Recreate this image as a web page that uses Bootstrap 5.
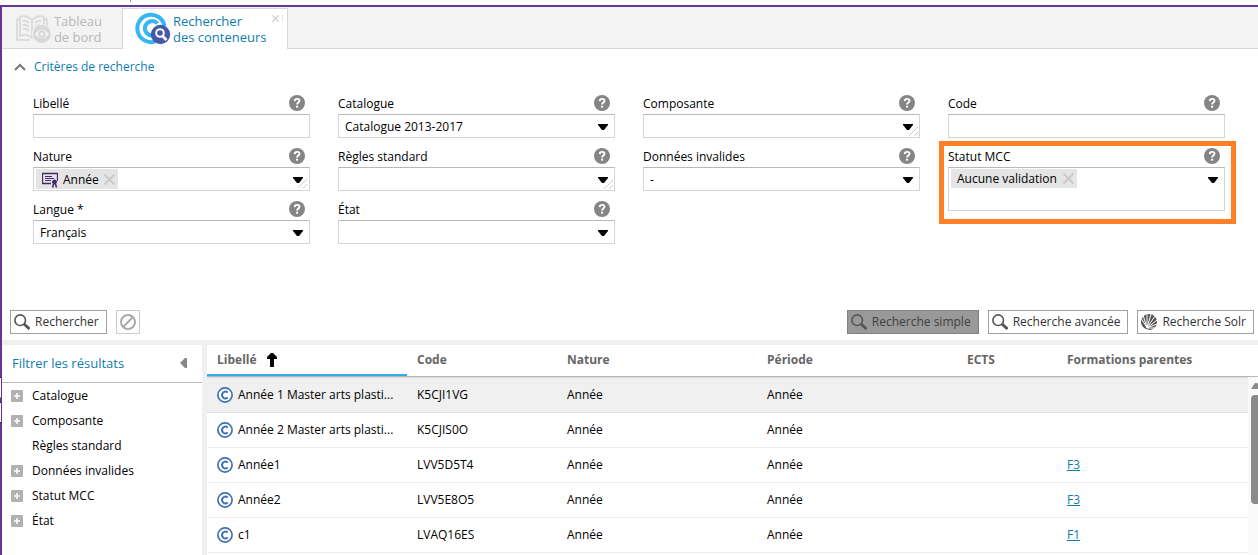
<!DOCTYPE html>
<html lang="fr">
<head>
<meta charset="utf-8">
<meta name="viewport" content="width=device-width, initial-scale=1">
<title>Rechercher des conteneurs</title>
<link href="https://cdn.jsdelivr.net/npm/bootstrap@5.3.0/dist/css/bootstrap.min.css" rel="stylesheet">
<style>
body{font:12px/18px "Open Sans",sans-serif;color:#000;background:#fff;margin:0;overflow:hidden}
.shell{height:100vh;padding-top:5px;background:#fdfcfb}
.shell::before{content:"";position:absolute;left:130px;top:0;width:1px;height:2px;background:#a89c96}
.frame{border-left:2px solid #663399;border-top:2px solid #663399;min-height:0;background:#fff;position:relative}
.frame::before{content:"";position:absolute;left:-2px;top:370px;width:1px;height:46px;background:linear-gradient(#222 1px,#fff 1px 20px,#e08060 20px 21px,#663399 21px 25px,#222 25px 26px,#fff 26px 45px,#222 45px)}
.tabbar{background:#f3f3f3;box-shadow:inset 0 -1px #d9d9d9;padding-top:1px;font-size:13px;line-height:16px}
.tabbtn{border:0;background:none;height:41px;color:#b8b8b8;padding:4px 20px 4px 14px;text-align:left;line-height:16px;gap:2px;width:120px;border-top:1px solid transparent}
.tabbtn.current{width:166px;color:#0f7cb0;background:#fff;border:1px solid #d9d9d9;border-bottom:0;padding:0 0 0 12px;gap:2px}
.tabclose{position:absolute;right:5px;top:7px;padding:0 3px 0 0;border:0;border-right:1px solid #e4e4e4;background:none;line-height:0}
.linkish{color:#0f7cb0}
.critbar{padding:9px 12px 0 12px}
.critbar button{border:0;background:none;padding:0;gap:8px;font-size:12px;line-height:18px}
.fields{display:grid;grid-template-columns:repeat(4,minmax(0,1fr));column-gap:28px;row-gap:9px;padding:18px 33px 0 31px}
.field{position:relative}
.fhead{height:20px;padding:1px 5px 0 0}
.fhead label{line-height:18px}
.fhead button{border:0;padding:0;background:none;line-height:0;height:16px}
.fbox{height:24px;border:1px solid #d4d4d4;border-top-color:#b9b9b9;background:#fff;position:relative;padding:0 22px 0 2px}
.fbox.tall{height:44px;align-items:flex-start!important;padding-top:1px}
.plain{width:100%;height:24px;display:block;border:1px solid #d4d4d4;border-top-color:#b9b9b9;border-radius:0;padding:1px 6px 0;background:#fff;color:#000;font-size:12px;appearance:none}
.fbox input{border:0;outline:0;background:none;flex:1;min-width:0;height:20px;padding:0 3px}
.arrow{position:absolute;right:6px;top:9px;pointer-events:none}
.grip{position:absolute;right:2px;bottom:2px;pointer-events:none}
.pick{position:relative}
.pick .arrow{right:7px;top:10px}
.chip{background:#e5e5e5;height:20px;padding:1px 3px 0 6px;gap:5px;line-height:18px}
.chip.short{height:19px;gap:6px;padding-top:0}
.chip button{border:0;background:none;padding:0;line-height:0}
.spot{grid-column:4;grid-row:2/4;align-self:start}
.spot::after{content:"";position:absolute;inset:-6px -11px -13px -9px;border:5px solid #ff7f27;pointer-events:none}
.tools{padding:0 4px 6px 8px}
.tool{border:1px solid #a0a0a0;border-radius:0;background:#fff;height:24px;color:#333;padding:0 7px 0 3px;font-size:12px;line-height:18px;gap:5px}
.tool.on{background:#999;border-color:#808080;color:#404040}
.tool.off{border-color:#ccc;width:24px;padding:0;justify-content:center}
.tools,.modes{gap:9px}
.upper{height:333px}
.lower{border-top:5px solid #f0f0f0;min-height:0}
.side{width:205px;border-right:5px solid #f0f0f0}
.sidehead{height:38px;border-bottom:1px solid #b9b9b9;padding:0 15px 2px 10px;font-size:13px}
.sidehead button{border:0;background:none;padding:0;line-height:0}
.side li{height:25px;padding-left:9px;gap:9px}
.toggle{width:12px;height:12px;padding:0;border:0;line-height:0;background:none}
.results{table-layout:fixed;width:100%;border-collapse:separate;border-spacing:0}
.results th{height:33px;color:#666;font-weight:700;padding:0 10px 2px;border-bottom:1px solid #dcdcdc;box-shadow:inset 0 -1px #b9b9b9;vertical-align:middle;white-space:nowrap;line-height:18px}
.results th.sorted{box-shadow:inset 0 -1px #b9b9b9,inset 0 -3px #35aaea}
.sortlabel{gap:10px}
.results td{height:35px;padding:0 10px;border-bottom:1px solid #ededed;white-space:nowrap;overflow:hidden}
.results tr.hit td{background:#f0f0f0;border-color:#e2e2e2}
.results a{color:#0f7cb0}
.label-cell{gap:5px}
.scroller{position:absolute;right:0;top:32px;bottom:0;width:10px;background:#fafafa}
.thumb{position:absolute;left:3px;right:0;top:18px;height:109px;background:#8b8b8b;border-radius:4px 0 0 4px}
.scroller svg{position:absolute;left:3px;top:5px}
</style>
</head>
<body>
<svg width="0" height="0" class="position-absolute" aria-hidden="true">
<symbol id="help" viewBox="0 0 16 16"><circle cx="8" cy="8" r="8" fill="#858585"/><path d="M5.7 6.1C5.8 3.2 10.5 3.1 10.5 5.8C10.5 7.5 8.1 7.7 8.1 9.5" fill="none" stroke="#fff" stroke-width="1.9"/><path d="M7.1 10.7h2v2h-2z" fill="#fff"/></symbol>
<symbol id="down" viewBox="0 0 10 6"><path d="M0 0H10V1L6 6H4L0 1Z"/></symbol>
<symbol id="gripmark" viewBox="0 0 9 9"><path d="M0 9L9 0M5 9L9 5" stroke="#ccc" fill="none"/></symbol>
<symbol id="cross" viewBox="0 0 10 10"><path d="M0.500 0.500L9.500 9.500M9.500 0.500L0.500 9.500" stroke="#c8c8c8" stroke-width="1.7"/></symbol>
<symbol id="lens" viewBox="0 0 16 16"><circle cx="6.200" cy="6.200" r="5.300" fill="none" stroke="#555" stroke-width="1.600"/><path d="M10 10L15.500 15" stroke="#555" stroke-width="2.800"/></symbol>
<symbol id="plus" viewBox="0 0 12 12"><rect width="12" height="12" rx="1" fill="#b1b1b1"/><path d="M3 6H9M6 3V9" stroke="#fff" stroke-width="1.500"/></symbol>
<symbol id="cc" viewBox="0 0 16 16"><circle cx="8" cy="8" r="7.100" fill="#fff" stroke="#3f70b4" stroke-width="1.700"/><path d="M10.700 5.400A3.400 3.400 0 1 0 10.700 10.600" fill="none" stroke="#3f70b4" stroke-width="1.900"/></symbol>
</svg>
<div class="shell d-flex flex-column">
<div class="frame d-flex flex-column flex-grow-1">
<section class="upper d-flex flex-column">
<nav class="tabbar d-flex flex-shrink-0">
<button class="tabbtn d-flex align-items-center" type="button">
<svg width="36" height="32" viewBox="0 0 36 32" fill="none" stroke="#dadada" stroke-width="1.800"><path d="M4 6H1V27H14M28 6H31V15M16 7Q10 1 4 4V23Q11 20 16 25Q21 20 28 23V4Q22 1 16 7V25M7 8Q11 7 13 10M7 12Q11 11 13 14M7 16Q11 15 13 18M19 10Q22 7 25 8M19 14Q22 11 25 12"/><circle cx="26" cy="21" r="9.500" fill="#d8d8d8" stroke="#f3f3f3" stroke-width="1"/><path d="M19 21Q26 12.500 33 21Q26 29.500 19 21Z" fill="#f3f3f3" stroke="none"/><circle cx="26" cy="21" r="3.600" fill="#d4d4d4" stroke="none"/><circle cx="26" cy="21" r="1.700" fill="#f3f3f3" stroke="none"/></svg>
<span>Tableau<br>de bord</span></button>
<div class="position-relative"><button class="tabbtn current d-flex align-items-center" type="button">
<svg width="36" height="34" viewBox="0 0 36 34" fill="none"><path d="M20 29.500A13.700 13.700 0 1 1 29.500 14M22.500 11.500A7.200 7.200 0 1 0 17 23.500" stroke="#36b7f4" stroke-width="4"/><circle cx="25.500" cy="22.500" r="9.700" fill="#4658ab"/><circle cx="25" cy="21" r="3.800" stroke="#fff" stroke-width="2"/><path d="M27.500 24L31.500 28" stroke="#fff" stroke-width="2.600"/></svg>
<span>Rechercher<br>des conteneurs</span></button>
<button class="tabclose" type="button" aria-label="Fermer"><svg width="7" height="7"><use href="#cross"/></svg></button></div>
</nav>
<div class="critbar d-flex"><button type="button" class="linkish d-flex align-items-center"><svg width="12" height="8" viewBox="0 0 12 8"><path d="M1 7L6 2L11 7" fill="none" stroke="#777" stroke-width="2"/></svg>Critères de recherche</button></div>
<form class="fields">
<div class="field"><div class="fhead d-flex justify-content-between"><label for="f1">Libellé</label><button type="button" aria-label="Aide"><svg width="16" height="16"><use href="#help"/></svg></button></div><input class="plain" id="f1"></div>
<div class="field"><div class="fhead d-flex justify-content-between"><label for="f2">Catalogue</label><button type="button" aria-label="Aide"><svg width="16" height="16"><use href="#help"/></svg></button></div><div class="pick"><select class="plain" id="f2"><option>Catalogue 2013-2017</option></select><svg class="arrow" width="10" height="6"><use href="#down"/></svg></div></div>
<div class="field"><div class="fhead d-flex justify-content-between"><label for="f3">Composante</label><button type="button" aria-label="Aide"><svg width="16" height="16"><use href="#help"/></svg></button></div><div class="pick"><select class="plain" id="f3"><option></option></select><svg class="arrow" width="10" height="6"><use href="#down"/></svg><svg class="grip" width="9" height="9"><use href="#gripmark"/></svg></div></div>
<div class="field"><div class="fhead d-flex justify-content-between"><label for="f4">Code</label><button type="button" aria-label="Aide"><svg width="16" height="16"><use href="#help"/></svg></button></div><input class="plain" id="f4"></div>
<div class="field"><div class="fhead d-flex justify-content-between"><label for="f5">Nature</label><button type="button" aria-label="Aide"><svg width="16" height="16"><use href="#help"/></svg></button></div><div class="fbox d-flex align-items-center"><span class="chip d-flex align-items-center"><svg width="16" height="16" viewBox="0 0 16 16" fill="none" stroke="#45296b"><path d="M9 11.500H0.500V1.500H15.500V9" stroke-width="1.300"/><path d="M3 4.500H10M3 6.500H12M3 8.500H9"/><circle cx="12.500" cy="10" r="2" fill="#45296b"/><path d="M11.500 12L10.500 15.500M13.500 12L14.500 15.500" stroke-width="1.600"/></svg>Année<button type="button" aria-label="Retirer Année"><svg width="11" height="11"><use href="#cross"/></svg></button></span><input id="f5"><svg class="arrow" width="10" height="6"><use href="#down"/></svg><svg class="grip" width="9" height="9"><use href="#gripmark"/></svg></div></div>
<div class="field"><div class="fhead d-flex justify-content-between"><label for="f6">Règles standard</label><button type="button" aria-label="Aide"><svg width="16" height="16"><use href="#help"/></svg></button></div><div class="pick"><select class="plain" id="f6"><option></option></select><svg class="arrow" width="10" height="6"><use href="#down"/></svg><svg class="grip" width="9" height="9"><use href="#gripmark"/></svg></div></div>
<div class="field"><div class="fhead d-flex justify-content-between"><label for="f7">Données invalides</label><button type="button" aria-label="Aide"><svg width="16" height="16"><use href="#help"/></svg></button></div><div class="pick"><select class="plain" id="f7"><option>-</option></select><svg class="arrow" width="10" height="6"><use href="#down"/></svg></div></div>
<div class="field spot"><div class="fhead d-flex justify-content-between"><label for="f8">Statut MCC</label><button type="button" aria-label="Aide"><svg width="16" height="16"><use href="#help"/></svg></button></div><div class="fbox tall d-flex"><span class="chip short d-flex align-items-center">Aucune validation<button type="button" aria-label="Retirer Aucune validation"><svg width="11" height="11"><use href="#cross"/></svg></button></span><input id="f8"><svg class="arrow" width="10" height="6"><use href="#down"/></svg></div></div>
<div class="field"><div class="fhead d-flex justify-content-between"><label for="f9">Langue *</label><button type="button" aria-label="Aide"><svg width="16" height="16"><use href="#help"/></svg></button></div><div class="pick"><select class="plain" id="f9"><option>Français</option></select><svg class="arrow" width="10" height="6"><use href="#down"/></svg></div></div>
<div class="field"><div class="fhead d-flex justify-content-between"><label for="f10">État</label><button type="button" aria-label="Aide"><svg width="16" height="16"><use href="#help"/></svg></button></div><div class="pick"><select class="plain" id="f10"><option></option></select><svg class="arrow" width="10" height="6"><use href="#down"/></svg></div></div>
</form>
<div class="tools d-flex mt-auto">
<button class="tool d-flex align-items-center" type="button"><svg width="16" height="16"><use href="#lens"/></svg>Rechercher</button>
<button class="tool off d-flex align-items-center" type="button" aria-label="Effacer"><svg width="16" height="16" viewBox="0 0 16 16" fill="none" stroke="#aaa" stroke-width="2"><circle cx="8" cy="8" r="7"/><path d="M3 13L13 3"/></svg></button>
<div class="modes d-flex ms-auto">
<button class="tool on d-flex align-items-center" type="button"><svg width="16" height="16"><use href="#lens"/></svg>Recherche simple</button>
<button class="tool d-flex align-items-center" type="button"><svg width="16" height="16"><use href="#lens"/></svg>Recherche avancée</button>
<button class="tool d-flex align-items-center" type="button"><svg width="16" height="16" viewBox="0 0 16 16"><path d="M5 15A8 8 0 0 1 0 8A8 8 0 0 1 8 0A8 8 0 0 1 16 8A8 8 0 0 1 9 16Z" fill="#555"/><path d="M6 14L0 4M6 14L2 1M6 14L6 0M6 14L10 0M6 14L14 2M6 14L16 6M6 14L16 10M6 14L16 14" stroke="#fff" stroke-width="1"/></svg>Recherche Solr</button>
</div></div>
</section>
<section class="lower d-flex flex-grow-1">
<aside class="side flex-shrink-0">
<div class="sidehead linkish d-flex align-items-center justify-content-between">Filtrer les résultats<button type="button" aria-label="Replier"><svg width="8" height="12"><path d="M8 1V11L6 11L1 6L6 1Z" fill="#888"/></svg></button></div>
<ul class="list-unstyled m-0">
<li class="d-flex align-items-center"><button class="toggle" type="button" aria-label="Déplier"><svg width="12" height="12"><use href="#plus"/></svg></button>Catalogue</li>
<li class="d-flex align-items-center"><button class="toggle" type="button" aria-label="Déplier"><svg width="12" height="12"><use href="#plus"/></svg></button>Composante</li>
<li class="d-flex align-items-center"><span class="toggle"></span>Règles standard</li>
<li class="d-flex align-items-center"><button class="toggle" type="button" aria-label="Déplier"><svg width="12" height="12"><use href="#plus"/></svg></button>Données invalides</li>
<li class="d-flex align-items-center"><button class="toggle" type="button" aria-label="Déplier"><svg width="12" height="12"><use href="#plus"/></svg></button>Statut MCC</li>
<li class="d-flex align-items-center"><button class="toggle" type="button" aria-label="Déplier"><svg width="12" height="12"><use href="#plus"/></svg></button>État</li>
</ul>
</aside>
<div class="flex-grow-1 position-relative overflow-hidden">
<table class="results">
<colgroup><col style="width:200px"><col style="width:150px"><col style="width:200px"><col style="width:200px"><col style="width:100px"><col></colgroup>
<thead><tr><th class="sorted"><div class="sortlabel d-flex align-items-center">Libellé<svg width="10" height="14" viewBox="0 0 10 14"><path d="M4 0H6L10 4V6H7V14H3V6H0V4Z"/></svg></div></th><th>Code</th><th>Nature</th><th>Période</th><th>ECTS</th><th>Formations parentes</th></tr></thead>
<tbody>
<tr class="hit"><td><div class="label-cell d-flex align-items-center"><svg class="flex-shrink-0" width="16" height="16"><use href="#cc"/></svg>Année 1 Master arts plasti...</div></td><td>K5CJI1VG</td><td>Année</td><td>Année</td><td></td><td></td></tr>
<tr><td><div class="label-cell d-flex align-items-center"><svg class="flex-shrink-0" width="16" height="16"><use href="#cc"/></svg>Année 2 Master arts plasti...</div></td><td>K5CJIS0O</td><td>Année</td><td>Année</td><td></td><td></td></tr>
<tr><td><div class="label-cell d-flex align-items-center"><svg class="flex-shrink-0" width="16" height="16"><use href="#cc"/></svg>Année1</div></td><td>LVV5D5T4</td><td>Année</td><td>Année</td><td></td><td><a href="#">F3</a></td></tr>
<tr><td><div class="label-cell d-flex align-items-center"><svg class="flex-shrink-0" width="16" height="16"><use href="#cc"/></svg>Année2</div></td><td>LVV5E8O5</td><td>Année</td><td>Année</td><td></td><td><a href="#">F3</a></td></tr>
<tr><td><div class="label-cell d-flex align-items-center"><svg class="flex-shrink-0" width="16" height="16"><use href="#cc"/></svg>c1</div></td><td>LVAQ16ES</td><td>Année</td><td>Année</td><td></td><td><a href="#">F1</a></td></tr>
</tbody></table>
<div class="scroller"><svg width="7" height="8"><path d="M0 7L4 1H6L7 2V7Z" fill="#8b8b8b"/></svg><div class="thumb"></div></div>
</div>
</section>
</div></div>
<script src="https://cdn.jsdelivr.net/npm/bootstrap@5.3.0/dist/js/bootstrap.bundle.min.js"></script>
</body>
</html>
